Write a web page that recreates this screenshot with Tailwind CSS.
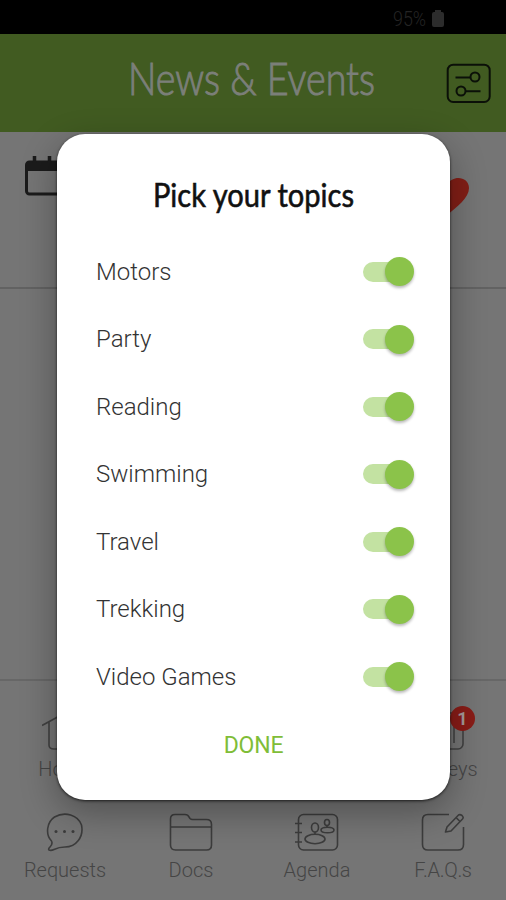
<!DOCTYPE html>
<html lang="en">
<head>
<meta charset="utf-8">
<title>News &amp; Events</title>
<script src="https://cdn.jsdelivr.net/npm/@tailwindcss/browser@4"></script>
</head>
<body class="w-[506px] h-[900px] overflow-hidden bg-[#757575] font-['Roboto','Liberation_Sans',sans-serif] font-light">
<div class="relative w-[506px] h-[900px] flex flex-col overflow-hidden">
  <div class="h-[34px] shrink-0 bg-black flex items-center pt-[3px] pl-[391px] gap-[3px] text-[#242424]">
    <svg width="38" height="28" viewBox="0 0 38 28" fill="currentColor"><text x="2" y="21" font-size="20" textLength="33" lengthAdjust="spacingAndGlyphs">95%</text></svg>
    <svg width="12" height="18" viewBox="0 0 12 18" fill="#2c2c2c"><path d="M3 2V0h6v2h1q2 0 2 2v11q0 2-2 2H2q-2 0-2-2V4q0-2 2-2z"/></svg>
  </div>
  <header class="h-[98px] shrink-0 bg-[#415b21] flex items-center justify-end pr-[15px] text-[#7b7f79]">
    <h1 class="mr-[66px] h-[64px]"><svg width="256" height="64" viewBox="0 0 256 64" fill="currentColor" class="font-['Lato',sans-serif]"><text x="4" y="44" font-size="45" textLength="247" lengthAdjust="spacingAndGlyphs" stroke="currentColor" stroke-width="1">News &amp; Events</text></svg></h1>
    <svg width="45" height="40" viewBox="0 0 45 40" fill="none" stroke="#0b1008" stroke-width="2"><rect x="1.700" y="1.700" width="42" height="37.300" rx="5.500"/><path d="M9.500 14.500h15M19.500 28.300h15"/><circle cx="29" cy="14" r="4.500"/><circle cx="15" cy="28" r="4.500"/></svg>
  </header>
  <section class="h-[157px] shrink-0 border-b-2 border-[#626262] flex justify-between pt-[23px] pl-[25px] pr-[37px]">
    <svg width="44" height="42" viewBox="0 0 44 42" fill="none" stroke="#1b1b1b"><rect x="1.500" y="7" width="40" height="32" rx="3" stroke-width="3"/><path d="M1 12h41" stroke-width="8"/><path d="M9.500 1v7M24.500 1v7" stroke-width="3.500"/></svg>
    <svg width="44" height="38" viewBox="0 0 44 38" class="mt-[23px]" fill="#821e16"><path d="M22 37C12 29 0 20 0 10C0-1 16-4 22 7C28-4 44-1 44 10C44 20 32 29 22 37z"/></svg>
  </section>
  <main class="flex-1"></main>
  <nav class="h-[221px] shrink-0 border-t-2 border-[#676767] grid grid-cols-4 grid-rows-[101px_101px] pt-[6px] pl-[2px] text-[#454545] text-[20px] leading-[24px]">
    <div class="flex flex-col items-center pt-[25px] gap-[3px]">
      <svg width="46" height="42" viewBox="0 0 46 42" fill="none" stroke="#414141" stroke-width="1.600"><path d="M0 13.500L23 1L46 13.500M7 10v23q0 4 5 4h22q5 0 5-4V10M17 37V22h12v15"/></svg>
      <span>Home</span>
    </div>
    <div></div>
    <div></div>
    <div class="flex flex-col items-center pt-[25px] gap-[3px] relative">
      <svg width="44" height="42" viewBox="0 0 44 42" fill="none" stroke="#414141" stroke-width="1.600"><rect x="1" y="1" width="41" height="36" rx="5"/><path d="M12 31V20M22 31V10M33 31V14"/></svg>
      <span>Surveys</span>
      <b class="absolute left-[70px] top-[19px] w-[25px] h-[25px] rounded-full bg-[#891c17] text-[#a49a99] text-[18px] leading-[25px] text-center font-bold">1</b>
    </div>
    <div class="flex flex-col items-center pt-[25px] gap-[3px]">
      <svg width="40" height="42" viewBox="0 0 40 42" fill="none" stroke="#3c3c3c" stroke-width="1.600" stroke-linejoin="round"><path d="M6.500 28C0 21 2 9 9.500 4C20-2 33 2 36.500 12C39 24 31 34 20 34C16 34 12 35 9 36.500Q6 38 4 37Q3 36 5 34Q8 31 6.500 28z"/><g fill="#3c3c3c" stroke="none"><circle cx="11" cy="18.500" r="1.500"/><circle cx="19.500" cy="18.500" r="1.500"/><circle cx="28" cy="18.500" r="1.500"/></g></svg>
      <span>Requests</span>
    </div>
    <div class="flex flex-col items-center pt-[25px] gap-[3px]">
      <svg width="44" height="42" viewBox="0 0 44 42" fill="none" stroke="#3c3c3c" stroke-width="1.600" stroke-linejoin="round"><path d="M1.500 6Q1.500 1.500 6 1.500h10q3 0 4 2.500l1 1.500q1 1 2.500 1h14q5 0 5 5V32q0 5-5 5H6.500q-5 0-5-5zM1.500 14h41"/></svg>
      <span>Docs</span>
    </div>
    <div class="flex flex-col items-center pt-[25px] gap-[3px]">
      <svg width="44" height="42" viewBox="0 0 44 42" fill="none" stroke="#3c3c3c" stroke-width="1.600"><rect x="3.500" y="1.500" width="39" height="35.500" rx="5"/><path d="M0 10.500h7M0 19.500h7M0 29h7"/><ellipse cx="20" cy="26" rx="10" ry="4.700"/><ellipse cx="20" cy="14.500" rx="3.500" ry="4.500"/><path d="M20 19v2.300M32 12v2"/><ellipse cx="32" cy="9.500" rx="2.500" ry="3"/><ellipse cx="32.500" cy="17" rx="6.500" ry="2.800"/></svg>
      <span>Agenda</span>
    </div>
    <div class="flex flex-col items-center pt-[25px] gap-[3px]">
      <svg width="44" height="42" viewBox="0 0 44 42" fill="none" stroke="#3c3c3c" stroke-width="1.600" stroke-linejoin="round"><path d="M28 1.500H7Q1.500 1.500 1.500 7v24.500q0 5.500 5.500 5.500h30q5.500 0 5.500-5.500V14M26 14L37.500 2Q39 1 41 2.500Q43 4.500 41.500 6L30 18L24.500 19zM35 4.500L39 8.500"/></svg>
      <span class="tracking-[-0.3px]">F.A.Q.s</span>
    </div>
  </nav>
  <div class="absolute left-[57px] top-[134px] w-[393px] h-[666px] rounded-[28px] bg-white shadow-[0_12px_36px_rgba(0,0,0,.32),0_1px_3px_rgba(0,0,0,.7)] flex flex-col items-center">
    <h2 class="h-[104px] w-[210px] shrink-0 pt-[36px]"><svg width="210" height="50" viewBox="0 0 210 50" fill="#111" class="font-['Lato',sans-serif] font-normal"><text x="4" y="37" font-size="33" textLength="201" lengthAdjust="spacingAndGlyphs" stroke="#111" stroke-width=".6">Pick your topics</text></svg></h2>
    <ul class="w-full pl-[39px] pr-[36px] text-[24px] text-[#333]">
      <li class="h-[67.500px] flex items-center justify-between"><span>Motors</span><i class="w-[51px] h-[29px] flex items-center"><i class="w-[36px] h-[20px] rounded-full bg-[#c3e2a2]"></i><i class="w-[29px] h-[29px] -ml-[14px] rounded-full bg-[#8bc34a] shadow-[0_2px_3px_rgba(0,0,0,.28)]"></i></i></li>
      <li class="h-[67.500px] flex items-center justify-between"><span>Party</span><i class="w-[51px] h-[29px] flex items-center"><i class="w-[36px] h-[20px] rounded-full bg-[#c3e2a2]"></i><i class="w-[29px] h-[29px] -ml-[14px] rounded-full bg-[#8bc34a] shadow-[0_2px_3px_rgba(0,0,0,.28)]"></i></i></li>
      <li class="h-[67.500px] flex items-center justify-between"><span>Reading</span><i class="w-[51px] h-[29px] flex items-center"><i class="w-[36px] h-[20px] rounded-full bg-[#c3e2a2]"></i><i class="w-[29px] h-[29px] -ml-[14px] rounded-full bg-[#8bc34a] shadow-[0_2px_3px_rgba(0,0,0,.28)]"></i></i></li>
      <li class="h-[67.500px] flex items-center justify-between"><span>Swimming</span><i class="w-[51px] h-[29px] flex items-center"><i class="w-[36px] h-[20px] rounded-full bg-[#c3e2a2]"></i><i class="w-[29px] h-[29px] -ml-[14px] rounded-full bg-[#8bc34a] shadow-[0_2px_3px_rgba(0,0,0,.28)]"></i></i></li>
      <li class="h-[67.500px] flex items-center justify-between"><span>Travel</span><i class="w-[51px] h-[29px] flex items-center"><i class="w-[36px] h-[20px] rounded-full bg-[#c3e2a2]"></i><i class="w-[29px] h-[29px] -ml-[14px] rounded-full bg-[#8bc34a] shadow-[0_2px_3px_rgba(0,0,0,.28)]"></i></i></li>
      <li class="h-[67.500px] flex items-center justify-between"><span>Trekking</span><i class="w-[51px] h-[29px] flex items-center"><i class="w-[36px] h-[20px] rounded-full bg-[#c3e2a2]"></i><i class="w-[29px] h-[29px] -ml-[14px] rounded-full bg-[#8bc34a] shadow-[0_2px_3px_rgba(0,0,0,.28)]"></i></i></li>
      <li class="h-[67.500px] flex items-center justify-between"><span>Video Games</span><i class="w-[51px] h-[29px] flex items-center"><i class="w-[36px] h-[20px] rounded-full bg-[#c3e2a2]"></i><i class="w-[29px] h-[29px] -ml-[14px] rounded-full bg-[#8bc34a] shadow-[0_2px_3px_rgba(0,0,0,.28)]"></i></i></li>
    </ul>
    <button class="mt-[17px] text-[23px] leading-[36px] font-normal tracking-[-0.2px] text-[#7fbd38]">DONE</button>
  </div>
</div>
</body>
</html>
